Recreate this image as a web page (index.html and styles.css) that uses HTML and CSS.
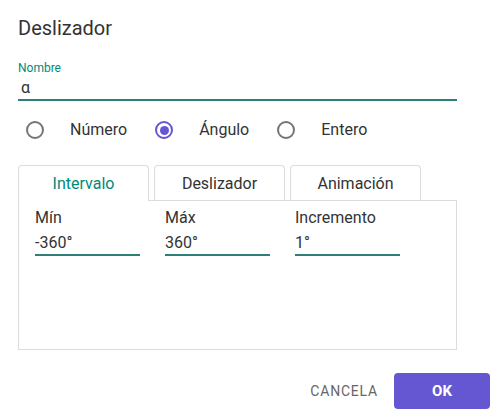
FILE: index.html
```html
<!DOCTYPE html>
<html lang="es">
<head>
<meta charset="utf-8">
<title>Deslizador</title>
<link rel="stylesheet" href="styles.css">
</head>
<body>
<div class="dialog">
  <h1 class="title">Deslizador</h1>

  <div class="name-field">
    <div class="float-label">Nombre</div>
    <div class="text-input name-input">α</div>
  </div>

  <div class="radios">
    <div class="radio"><span class="circle"></span><span class="radio-label">Número</span></div>
    <div class="radio checked"><span class="circle"></span><span class="radio-label">Ángulo</span></div>
    <div class="radio"><span class="circle"></span><span class="radio-label">Entero</span></div>
  </div>

  <div class="tabs">
    <div class="tab active">Intervalo</div>
    <div class="tab">Deslizador</div>
    <div class="tab">Animación</div>
  </div>
  <div class="panel">
    <div class="field">
      <div class="field-label">Mín</div>
      <div class="text-input">-360°</div>
    </div>
    <div class="field">
      <div class="field-label">Máx</div>
      <div class="text-input">360°</div>
    </div>
    <div class="field">
      <div class="field-label">Incremento</div>
      <div class="text-input">1°</div>
    </div>
  </div>

  <div class="actions">
    <button class="btn-text">CANCELA</button>
    <button class="btn-primary">OK</button>
  </div>
</div>
</body>
</html>
```

FILE: styles.css
```css
* { box-sizing: border-box; }

html, body {
  margin: 0;
  padding: 0;
  background: #ffffff;
}

body {
  font-family: Roboto, "Liberation Sans", Arial, sans-serif;
  color: #333333;
}

.dialog {
  width: 472px;
  padding: 16px 0 0 18px;
  box-sizing: content-box;
}

.title {
  margin: 0;
  font-size: 20px;
  line-height: 24px;
  font-weight: 400;
  color: #333333;
}

.name-field {
  width: 439px;
  margin-top: 21px;
}

.float-label {
  font-size: 12px;
  line-height: 14px;
  color: #00897b;
}

.text-input {
  font-size: 16px;
  line-height: 20px;
  color: #333333;
  border-bottom: 2px solid #2e7f79;
  padding: 0 0 1px 0;
}

.name-input {
  margin-top: 3px;
  padding-left: 3px;
}

.radios {
  display: flex;
  align-items: center;
  height: 24px;
  margin-top: 17px;
  padding-left: 8px;
}

.radio {
  display: flex;
  align-items: center;
  margin-right: 28px;
}

.circle {
  width: 18px;
  height: 18px;
  border: 2px solid #757575;
  border-radius: 50%;
  display: flex;
  align-items: center;
  justify-content: center;
  flex: none;
}

.radio.checked .circle {
  border-color: #6557d2;
}

.radio.checked .circle::after {
  content: "";
  width: 9px;
  height: 9px;
  border-radius: 50%;
  background: #6557d2;
}

.radio-label {
  margin-left: 26px;
  font-size: 16px;
  line-height: 20px;
  color: #333333;
}

.tabs {
  display: flex;
  gap: 5px;
  margin-top: 23px;
  width: 439px;
  align-items: flex-end;
}

.tab {
  width: 131px;
  height: 35px;
  border: 1px solid #dcdcdc;
  border-bottom: none;
  border-radius: 4px 4px 0 0;
  font-size: 16px;
  line-height: 20px;
  color: #333333;
  display: flex;
  align-items: center;
  justify-content: center;
  padding-top: 1px;
  background: #ffffff;
}

.tab.active {
  color: #00897b;
  height: 36px;
  margin-bottom: -1px;
  position: relative;
  z-index: 1;
}

.panel {
  width: 439px;
  height: 150px;
  border: 1px solid #dcdcdc;
  display: flex;
  gap: 25px;
  padding: 7px 0 0 16px;
  align-items: flex-start;
}

.field {
  width: 105px;
}

.field-label {
  font-size: 16px;
  line-height: 20px;
  color: #333333;
}

.field .text-input {
  margin-top: 5px;
}

.actions {
  display: flex;
  justify-content: flex-end;
  align-items: center;
  gap: 16px;
  margin-top: 23px;
  width: 472px;
}

.btn-text {
  border: none;
  background: none;
  font-family: inherit;
  font-size: 14px;
  color: #666666;
  padding: 0;
  letter-spacing: 0.8px;
}

.btn-primary {
  width: 96px;
  height: 36px;
  border: none;
  border-radius: 4px;
  background: #6557d2;
  color: #ffffff;
  font-family: inherit;
  font-size: 15px;
  font-weight: 700;
}
```
